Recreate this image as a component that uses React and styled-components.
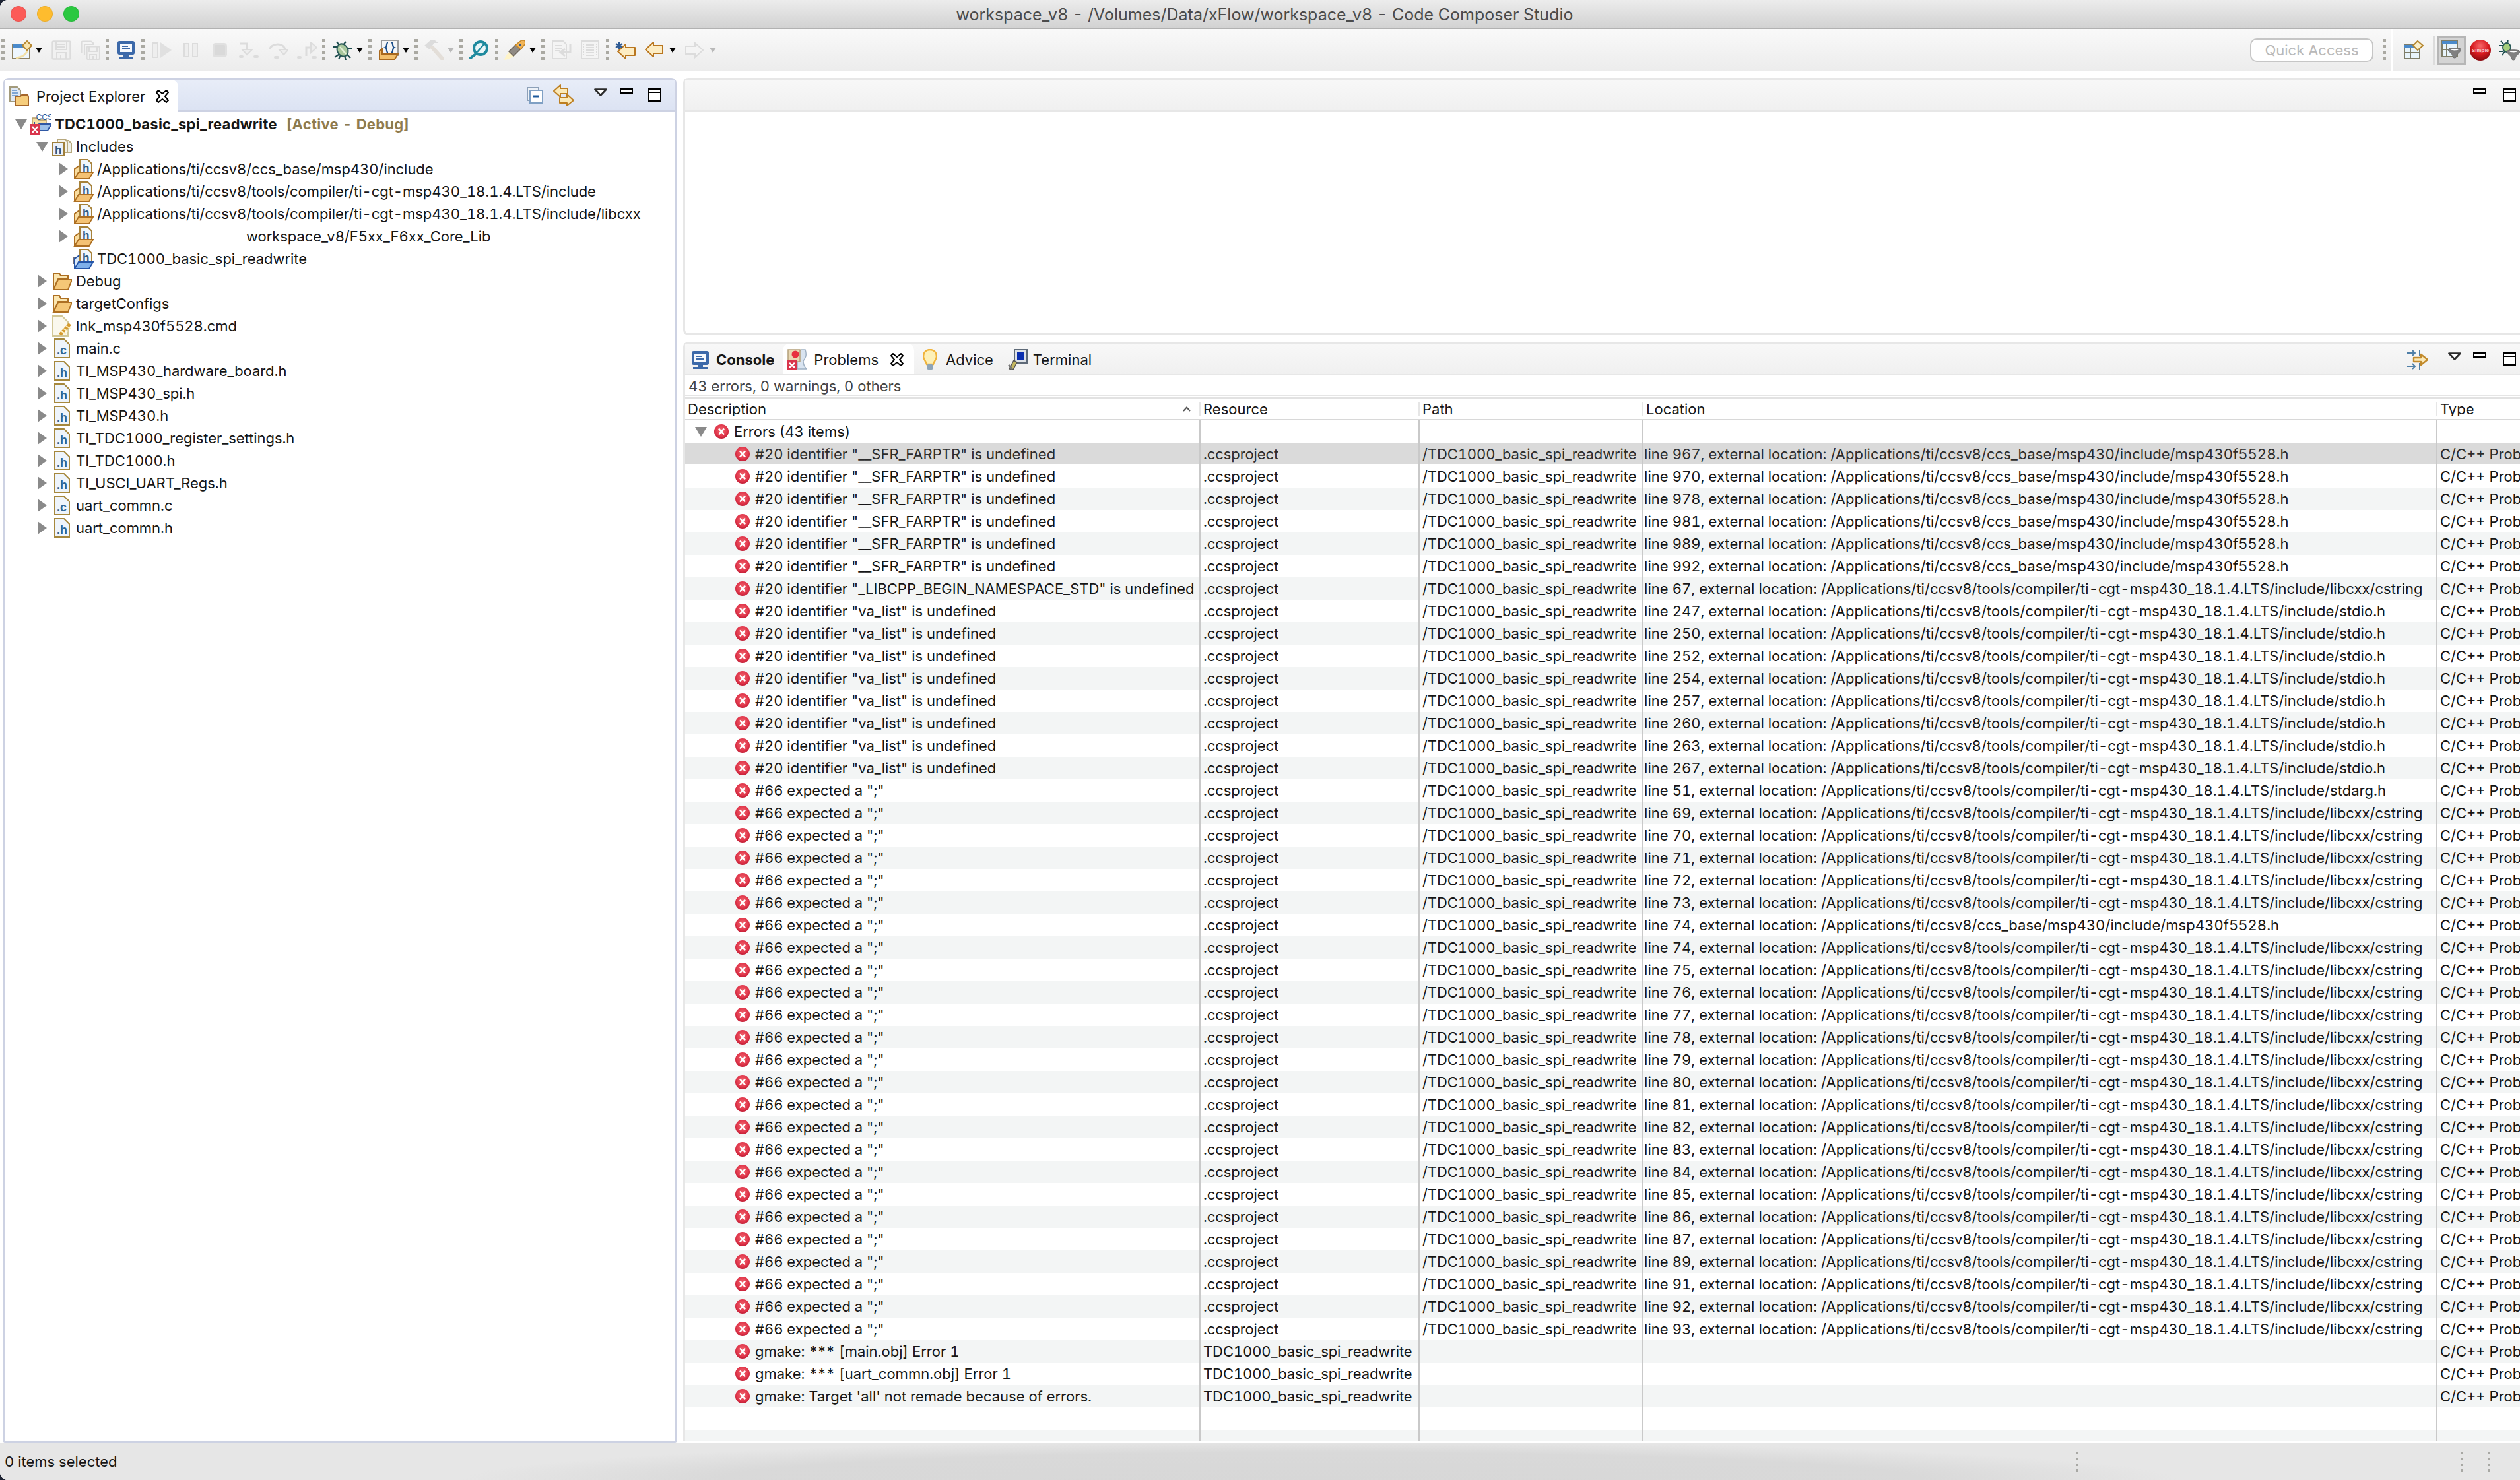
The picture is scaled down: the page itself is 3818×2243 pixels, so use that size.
import React from "react";
import styled, { createGlobalStyle } from "styled-components";

const Global = createGlobalStyle`
  html, body { margin: 0; padding: 0; background: #1d2333; }
  body { width: 3818px; height: 2243px; overflow: hidden; }
  * { box-sizing: border-box; }
`;

const Window = styled.div`
  width: 3818px; height: 2243px; display: flex; flex-direction: column; overflow: hidden;
  background: #fff; border-radius: 12px 0 0 12px;
  font-family: Inter, "Liberation Sans", sans-serif; font-size: 22px; color: #161616;
  font-variant-numeric: tabular-nums;
  -webkit-font-smoothing: antialiased;
`;
const TitleBar = styled.header`
  height: 44px; flex: none; display: flex; align-items: center; position: relative; padding-left: 16px; gap: 16px;
  background: linear-gradient(#ececec, #d2d2d2); border-bottom: 2px solid #b1b1b1;
`;
const Light = styled.span`
  width: 24px; height: 24px; border-radius: 50%; background: ${p => p.$c}; box-shadow: inset 0 0 0 1px rgba(0,0,0,.08);
`;
const WindowTitle = styled.div`
  position: absolute; left: 14px; right: 0; text-align: center; color: #4b4b4b; font-size: 25px; padding-top: 1px;
`;
const Toolbar = styled.div`
  height: 63px; flex: none; display: flex; align-items: center; padding-left: 2px;
  background: linear-gradient(#f9f9f9, #ececec);
`;
const Tool = styled.span`
  flex: none; display: flex; align-items: center; justify-content: center; width: ${p => p.$w}px; margin-left: ${p => p.$g || 0}px;
`;
const Grip = styled.span`
  flex: none; width: 5px; height: 33px; margin-left: ${p => p.$g || 0}px;
  background: repeating-linear-gradient(to bottom, #aaa9a2 0 5px, transparent 5px 9px);
`;
const ToolbarEnd = styled.div`
  margin-left: auto; display: flex; align-items: center; height: 100%;
`;
const QuickAccess = styled.div`
  width: 187px; height: 36px; border: 2px solid #c6c6c6; border-radius: 10px; background: #fff; color: #b9b9b9;
  display: flex; align-items: center; justify-content: center; font-size: 22px;
`;
const PerspectiveEdge = styled.span`
  width: 3px; height: 100%; background: #fff; margin-left: 8px;
`;
const PerspectiveRule = styled.span`
  width: 3px; height: 44px; background: #dcdcdc; margin-left: 14px;
`;
const PerspectiveActive = styled.span`
  width: 44px; height: 44px; margin-left: 3px; background: #d4d4d4; border: 3px solid #b6b6b6;
  display: flex; align-items: center; justify-content: center;
`;
const Main = styled.main`
  flex: 1; min-height: 0; display: flex; padding: 11px 0 0 5px; background: #fff;
`;
const LeftPanel = styled.section`
  width: 1020px; flex: none; display: flex; flex-direction: column; background: #fff;
  border: 3px solid #cdd2e3; border-radius: 8px 8px 2px 2px;
`;
const LeftHeader = styled.div`
  height: 48px; flex: none; display: flex; background: linear-gradient(#e8edf8, #dce3f3); border-bottom: 3px solid #cdd2e3;
`;
const ActiveTab = styled.div`
  height: 48px; display: flex; align-items: center; background: #fff; border-radius: 0 10px 0 0;
  padding: 2px ${p => p.$pr}px 0 ${p => p.$pl}px;
`;
const TabText = styled.span`
  margin-left: ${p => p.$g}px; font-weight: ${p => (p.$bold ? 700 : 400)}; white-space: nowrap;
`;
const CloseSlot = styled.span`
  display: flex; margin-left: ${p => p.$g}px;
`;
const Actions = styled.div`
  margin-left: auto; display: flex; align-items: flex-start; padding-right: ${p => p.$pr}px;
`;
const Action = styled.span`
  display: flex; margin-left: ${p => p.$g || 0}px; margin-top: ${p => p.$top}px;
`;
const Tree = styled.div`
  padding-top: 2px;
`;
const TreeRow = styled.div`
  height: 34px; display: flex; align-items: center; padding-left: ${p => 13 + p.$depth * 32}px; white-space: nowrap;
`;
const Twisty = styled.span`
  width: 22px; flex: none; display: flex; justify-content: center;
`;
const TreeIcon = styled.span`
  width: 32px; margin-left: 3px; flex: none; display: flex; justify-content: center;
`;
const TreeLabel = styled.span`
  margin-left: ${p => 5 + (p.$skip || 0)}px; font-weight: ${p => (p.$bold ? 700 : 400)};
  letter-spacing: ${p => (p.$bold ? "0.25px" : "-0.05px")};
`;
const Decoration = styled.span`
  margin-left: 14px; font-weight: 700; color: #8f7b4e; letter-spacing: 0.25px;
`;
const RightColumn = styled.div`
  flex: 1; min-width: 0; margin-left: 10px; display: flex; flex-direction: column; gap: 10px; padding-bottom: 3px;
`;
const EditorPanel = styled.section`
  height: 390px; flex: none; border: 3px solid #e7e7e7; border-right: 0; border-radius: 8px 0 0 8px; display: flex; flex-direction: column;
`;
const GreyHeader = styled.div`
  height: 48px; flex: none; display: flex; background: linear-gradient(#f8f8f8, #f0f0f0); border-bottom: 2px solid #e7e7e7;
`;
const ViewPanel = styled.section`
  flex: 1; min-height: 0; border-top: 3px solid #e7e7e7; border-left: 3px solid #e7e7e7; border-radius: 8px 0 0 0;
  display: flex; flex-direction: column;
`;
const ViewTab = styled.div`
  height: 46px; display: flex; align-items: center; padding: 2px ${p => p.$pr || 0}px 0 ${p => p.$pl || 0}px;
  margin-left: ${p => p.$ml || 0}px; border-radius: 10px 10px 0 0; background: ${p => (p.$active ? "#fff" : "transparent")};
`;
const SummaryLine = styled.div`
  height: 31px; flex: none; display: flex; align-items: center; padding: 3px 0 0 5px; color: #444; border-bottom: 2px solid #e5e5e5;
`;
const TableRule = styled.div`
  height: 4px; flex: none; border-bottom: 2px solid #e2e2e2;
`;
const columns = "779px 332px 339px 1203px 1fr";
const HeaderRow = styled.div`
  height: 33px; flex: none; display: grid; grid-template-columns: ${columns}; border-bottom: 2px solid #d8d8d8; overflow: hidden;
`;
const HeaderCell = styled.div`
  display: flex; align-items: center; padding-right: 13px; white-space: nowrap; overflow: hidden;
  justify-content: space-between; height: 22px; margin-top: 5px;
  border-left: ${p => (p.$first ? "0" : "2px solid #e6e6e6")}; padding-left: 4px;
`;
const TableBody = styled.div`
  flex: 1; min-height: 0; overflow: hidden;
`;
const Row = styled.div`
  height: 34px; display: grid; grid-template-columns: ${columns};
  background: ${p => (p.$selected ? "linear-gradient(#dadada 32px, #fff 32px)" : p.$shade ? "#f3f5f5" : "#fff")};
  color: ${p => (p.$selected ? "#2c2c2c" : "#161616")};
`;
const Cell = styled.div`
  height: 34px; display: flex; align-items: center; white-space: pre; overflow: hidden; color: inherit;
  padding-left: ${p => p.$pl ?? 4}px; border-left: ${p => (p.$first ? "0" : "2px solid #c9c9c9")};
  letter-spacing: ${p => p.$ls || 0}px;
`;
const Stars = styled.span`
  letter-spacing: -1.5px; margin-right: 1.5px;
`;
const CellIcon = styled.span`
  display: flex; flex: none; margin-right: 8px;
`;
const RowTwisty = styled.span`
  display: flex; flex: none; margin-right: 11px;
`;
const StatusBar = styled.footer`
  height: 56px; flex: none; position: relative; display: flex; align-items: center; padding-left: 7px; color: #161616;
  background: radial-gradient(ellipse 1300px 60px at 2000px 100%, #d7d7d7 0, #d9d9d9 70%, #e6e6e6 100%), #e6e6e6;
`;
const StatusGrips = styled.div`
  margin-left: auto; display: flex; padding-right: 45px;
`;
const StatusGrip = styled.span`
  width: 3px; height: 31px; margin-left: ${p => p.$g}px;
  background: repeating-linear-gradient(to bottom, #a8a8a4 0 4px, transparent 4px 9px);
`;

/* ---------- icons ---------- */
const Ico = ({ w, h, vb, children }) => (
  <svg width={w} height={h} viewBox={vb || `0 0 ${w} ${h}`} style={{ display: "block", flex: "none" }}>{children}</svg>
);
const DropArrow = ({ off }) => <Ico w={10} h={8}><path d="M0 0H10L5 8Z" fill={off ? "#b9b9b9" : "#000"} /></Ico>;
const NewIcon = () => (
  <Ico w={30} h={29}>
    <rect x="1" y="6" width="26" height="22" fill="#eef6fd" stroke="#8e8263" strokeWidth="2" />
    <rect x="1" y="6" width="20" height="5" fill="#4a8acb" />
    <path d="M24 14C22 22 15 26 6 27" fill="none" stroke="#f3e0a6" strokeWidth="3" />
    <path d="M23 1L30 8L23 15L16 8Z" fill="#f9e5ad" stroke="#b5862e" strokeWidth="2" />
  </Ico>
);
const off = "#dcdcdc";
const SaveIcon = () => (
  <Ico w={30} h={30}>
    <path d="M3 1.5H27A1.5 1.5 0 0 1 28.5 3V27A1.5 1.5 0 0 1 27 28.5H3A1.5 1.5 0 0 1 1.5 27V3A1.5 1.5 0 0 1 3 1.5Z" fill="#f1f1f1" stroke={off} strokeWidth="2.4" />
    <path d="M7 2V14H23V2M9 6H21M9 10H21M8 28V19H22V28M14 22V28" fill="none" stroke={off} strokeWidth="2" />
  </Ico>
);
const SaveAllIcon = () => (
  <Ico w={30} h={30}>
    <path d="M1.5 19V3A1.5 1.5 0 0 1 3 1.5H16L20 5" fill="none" stroke={off} strokeWidth="2.2" />
    <path d="M6 23V6H21" fill="none" stroke={off} strokeWidth="2.2" />
    <rect x="9.5" y="9.5" width="19.5" height="19.5" rx="2" fill="#f1f1f1" stroke={off} strokeWidth="2.2" />
    <path d="M13 10V17H25V10M14 29V22H24V29M19 24V29" fill="none" stroke={off} strokeWidth="2" />
  </Ico>
);
const ConsoleIcon = () => (
  <Ico w={26} h={27}>
    <rect x="0" y="0" width="26" height="21" rx="3" fill="#3c69a9" />
    <rect x="4" y="4" width="18" height="13" fill="#f6f9fd" />
    <path d="M7 8H16M7 12H19" stroke="#3c69a9" strokeWidth="2" />
    <rect x="9" y="21" width="8" height="3" fill="#3c69a9" /><rect x="2" y="24" width="22" height="3" fill="#3c69a9" />
  </Ico>
);
const ResumeIcon = () => (
  <Ico w={30} h={28}><rect x="1" y="3" width="8" height="22" fill="#eee" stroke={off} strokeWidth="2" /><path d="M13 2L30 14L13 26Z" fill="#e0e0e0" /></Ico>
);
const SuspendIcon = () => (
  <Ico w={22} h={22}><rect x="1" y="1" width="7" height="20" fill="#eee" stroke={off} strokeWidth="2" /><rect x="14" y="1" width="7" height="20" fill="#eee" stroke={off} strokeWidth="2" /></Ico>
);
const StopIcon = () => (
  <Ico w={22} h={22}><rect x="1.5" y="1.5" width="19" height="19" rx="3" fill="#d9d9d9" stroke="#e0e0e0" strokeWidth="3" /></Ico>
);
const StepInto = () => (
  <Ico w={30} h={24}><path d="M1 2H12V13" fill="none" stroke={off} strokeWidth="3" /><path d="M5 11H20L12 19Z" fill="#eee" stroke={off} strokeWidth="2" /><rect x="0" y="20" width="7" height="4" rx="2" fill={off} /><rect x="22" y="20" width="8" height="4" rx="2" fill={off} /></Ico>
);
const StepOver = () => (
  <Ico w={30} h={26}><path d="M2 12C2 3 22 0 25 12" fill="none" stroke={off} strokeWidth="3" /><path d="M16 12H30L23 20Z" fill="#eee" stroke={off} strokeWidth="2" /><rect x="8" y="22" width="8" height="4" rx="2" fill={off} /></Ico>
);
const StepReturn = () => (
  <Ico w={30} h={26}><path d="M14 22V9H24" fill="none" stroke={off} strokeWidth="3" /><path d="M21 1L30 9L21 17Z" fill="#eee" stroke={off} strokeWidth="2" /><rect x="0" y="22" width="7" height="4" rx="2" fill={off} /><rect x="22" y="22" width="8" height="4" rx="2" fill={off} /></Ico>
);
const BugIcon = () => (
  <Ico w={30} h={30}>
    <path d="M6 2L11 9M20 2L15 8M0 10H8L10 13M30 12H23L20 14M3 26L9 22L10 18M27 27L22 22L20 19M9 29L12 23M20 30L18 24" fill="none" stroke="#1c4c4e" strokeWidth="2.2" />
    <ellipse cx="15" cy="15" rx="8" ry="10" transform="rotate(-28 15 15)" fill="#a8c79d" stroke="#2a5a58" strokeWidth="2" />
    <path d="M11 10L20 21" stroke="#e4f0d8" strokeWidth="2.5" />
  </Ico>
);
const FolderBraces = () => (
  <Ico w={30} h={31}>
    <rect x="4" y="1" width="25" height="23" fill="#f6f6f6" stroke="#9b9b9b" strokeWidth="2" />
    <path d="M14 4C11 4 13 11 10 12C13 13 11 20 14 20M19 4C22 4 20 11 23 12C20 13 22 20 19 20" fill="none" stroke="#1b4e8a" strokeWidth="2.2" />
    <path d="M1 30V17L5 14V22H29L24 30Z" fill="#f2bf6b" stroke="#a9691e" strokeWidth="2" />
  </Ico>
);
const HammerIcon = () => (
  <Ico w={30} h={31}>
    <path d="M1 9L10 1H17L22 5L16 5L12 10L9 15Z" fill="#dcdcdc" />
    <path d="M13 12L28 29" stroke="#e3ded8" strokeWidth="6" strokeLinecap="round" />
  </Ico>
);
const SearchIcon = () => (
  <Ico w={30} h={29}>
    <circle cx="17" cy="12" r="10" fill="#eaf6f8" stroke="#1f8a9e" strokeWidth="4" />
    <path d="M11 20L2 27" stroke="#1f8a9e" strokeWidth="4" strokeLinecap="round" />
    <path d="M12 18L22 6" stroke="#1f8a9e" strokeWidth="2.5" />
  </Ico>
);
const PenIcon = () => (
  <Ico w={32} h={31}>
    <path d="M0 31C2 24 6 20 10 16L17 23C14 26 8 30 0 31Z" fill="#fff4c8" />
    <path d="M7 18L18 7L25 14L14 25Z" fill="#8f8a84" stroke="#6d655c" strokeWidth="1.5" />
    <path d="M17 8L26 1L31 1L32 6L25 15Z" fill="#f2b558" stroke="#c08325" strokeWidth="1.5" />
    <circle cx="24" cy="8" r="1.8" fill="#2f5a94" />
  </Ico>
);
const DocArrow = () => (
  <Ico w={30} h={29}>
    <path d="M1 1H17L22 6V28H1Z" fill="#f4f4f4" stroke={off} strokeWidth="2" />
    <path d="M5 8H15M5 12H15M5 16H12" stroke={off} strokeWidth="2" />
    <path d="M28 5V18H15M20 13L13 18L20 24" fill="none" stroke={off} strokeWidth="3" />
  </Ico>
);
const ListDoc = () => (
  <Ico w={28} h={29}>
    <rect x="1" y="1" width="26" height="27" fill="#f4f4f4" stroke={off} strokeWidth="2" />
    <path d="M8 7H20M8 11H20M8 15H20M8 19H20M8 23H20" stroke={off} strokeWidth="2" />
    <path d="M4 5V24M24 5V24" stroke={off} strokeWidth="2" strokeDasharray="2 2" />
  </Ico>
);
const BackArrowShape = () => (
  <path d="M1 12L13 1V6H27V18H13V23Z" fill="#fdedc4" stroke="#b9761f" strokeWidth="2" strokeLinejoin="round" />
);
const BackStar = () => (
  <Ico w={32} h={28}>
    <g transform="translate(3 4)"><BackArrowShape /></g>
    <path d="M6 1V13M1 4L11 10M11 4L1 10" stroke="#2e5a94" strokeWidth="2.4" />
  </Ico>
);
const BackIcon = () => <Ico w={29} h={25}><BackArrowShape /></Ico>;
const ForwardIcon = () => (
  <Ico w={28} h={26}><path d="M27 13L15 2V7H1V19H15V24Z" fill="#f4f4f4" stroke={off} strokeWidth="2" /></Ico>
);
const PerspectiveIcon = () => (
  <Ico w={30} h={29}>
    <rect x="1" y="7" width="23" height="21" fill="#e8f4fb" stroke="#7e7d68" strokeWidth="2" />
    <rect x="1" y="7" width="23" height="4" fill="#4a8acb" />
    <path d="M10 11V28M1 19H24" stroke="#7e7d68" strokeWidth="2" />
    <path d="M21 1L29 8L21 15L14 8Z" fill="#faf0cc" stroke="#b5862e" strokeWidth="2" />
  </Ico>
);
const Funnel = ({ x = 0, y = 0 }) => (
  <g transform={`translate(${x} ${y})`}>
    <path d="M0 4C0 1 20 1 20 4C20 7 13 11 13 14C13 18 7 18 7 14C7 11 0 7 0 4Z" fill="#808080" stroke="#6f6f6f" />
    <path d="M4 3.5H16C16 6 4 6 4 3.5Z" fill="#fff" />
  </g>
);
const PerspectiveFunnel = () => (
  <Ico w={30} h={30}>
    <rect x="1" y="1" width="23" height="24" fill="#e8f4fb" stroke="#7e7d68" strokeWidth="2" />
    <rect x="1" y="1" width="23" height="4" fill="#4a8acb" />
    <path d="M8 5V25M1 14H24" stroke="#7e7d68" strokeWidth="2" />
    <Funnel x={10} y={10} />
  </Ico>
);
const RedBall = () => (
  <Ico w={32} h={32}>
    <defs><radialGradient id="ball" cx=".5" cy=".3" r=".7"><stop offset="0" stopColor="#f7676a" /><stop offset=".55" stopColor="#d81b20" /><stop offset="1" stopColor="#8a0a10" /></radialGradient></defs>
    <circle cx="16" cy="16" r="16" fill="url(#ball)" />
    <text x="16" y="19" textAnchor="middle" fontSize="8" fontFamily="Liberation Sans, sans-serif" fontWeight="700" fill="#f6c8c8">Simple</text>
  </Ico>
);
const BugFunnel = () => (
  <Ico w={32} h={32}>
    <path d="M3 2L9 9M14 1L11 8M0 9H6M0 18H6L9 14M5 24L9 18" stroke="#1c4c4e" strokeWidth="2" fill="none" />
    <ellipse cx="12" cy="12" rx="6" ry="7" fill="#a5cf7c" stroke="#2a5a58" strokeWidth="2" />
    <Funnel x={12} y={14} />
  </Ico>
);
const ExplorerIcon = () => (
  <Ico w={30} h={30}>
    <path d="M1 1H12L17 6V23H1Z" fill="#dfe8f5" stroke="#a39b7c" strokeWidth="2" />
    <path d="M4 6H11M4 10H13M4 14H13" stroke="#5f8fc9" strokeWidth="1.6" />
    <path d="M9 29V15H17L19 13H28L29 16V29Z" fill="#f6cd7c" stroke="#a5652a" strokeWidth="2" />
  </Ico>
);
const CloseIcon = () => (
  <Ico w={20} h={20}>
    <path d="M4 1L10 6L16 1L19 4L14 10L19 16L16 19L10 14L4 19L1 16L6 10L1 4Z" fill="#fff" stroke="#000" strokeWidth="2" strokeLinejoin="round" />
  </Ico>
);
const CollapseIcon = () => (
  <Ico w={25} h={25}>
    <rect x="1" y="1" width="17" height="19" fill="#eef2f8" stroke="#8da0b8" strokeWidth="2" />
    <rect x="5" y="5" width="19" height="19" fill="#fff" stroke="#7fa0c4" strokeWidth="2" />
    <path d="M10 14H19" stroke="#1e5a9c" strokeWidth="3" />
  </Ico>
);
const LinkIcon = () => (
  <Ico w={32} h={33}>
    <path d="M1 10L11 1V6H22V14H11V19Z" fill="#fbe9b8" stroke="#bd7f22" strokeWidth="2" strokeLinejoin="round" />
    <path d="M31 24L21 15V20H10V28H21V32Z" fill="#fbe9b8" stroke="#bd7f22" strokeWidth="2" strokeLinejoin="round" />
  </Ico>
);
const MenuTri = () => <Ico w={20} h={12}><path d="M1.5 1.5H18.5L10 10.5Z" fill="#fff" stroke="#2b2b2b" strokeWidth="2.6" strokeLinejoin="round" /></Ico>;
const MinIcon = () => <Ico w={20} h={8}><rect x="1" y="1" width="18" height="6" fill="#fff" stroke="#000" strokeWidth="2" /></Ico>;
const MaxIcon = () => (
  <Ico w={20} h={20}><rect x="1" y="1" width="18" height="18" fill="#fff" stroke="#000" strokeWidth="2" /><path d="M1 6H19" stroke="#000" strokeWidth="2" /></Ico>
);
const PinIcon = () => (
  <Ico w={32} h={30}>
    <path d="M0 5H12M8 1L12 5L8 9M0 25H12M8 21L12 25L8 29" fill="none" stroke="#4f7fa8" strokeWidth="2" />
    <path d="M19 0V10M19 20V30" stroke="#4f7fa8" strokeWidth="2" />
    <path d="M10 12H21V7L31 15L21 23V18H10Z" fill="#fbe9b8" stroke="#c28a2c" strokeWidth="2.4" strokeLinejoin="round" />
  </Ico>
);
const TriDown = () => <Ico w={18} h={15}><path d="M0 0H18L9 15Z" fill="#8a8a8a" /></Ico>;
const TriRight = () => <Ico w={14} h={20}><path d="M0 0L14 10L0 20Z" fill="#8a8a8a" /></Ico>;
const ProjectIcon = () => (
  <Ico w={32} h={34}>
    <path d="M3 18V8H10L12 11H24V18Z" fill="#f7e0a4" stroke="#b59b63" strokeWidth="1.5" />
    <path d="M6 27L13 17H32L26 27Z" fill="#9cc1ea" stroke="#2f58a4" strokeWidth="2" />
    <path d="M6 14V27" stroke="#2f58a4" strokeWidth="2" />
    <rect x="0" y="17" width="14" height="17" fill="#d9354c" />
    <path d="M3 21L11 30M11 21L3 30" stroke="#fff" strokeWidth="2.4" />
    <text x="21" y="11" textAnchor="middle" fontSize="12" fontFamily="Inter, sans-serif" fill="#2a5a97">CCS</text>
  </Ico>
);
const HText = ({ x, y, s = 18 }) => (
  <text x={x} y={y} fontSize={s} fontWeight="700" fontFamily="Liberation Sans, sans-serif" fill="#2f5a84">h</text>
);
const IncludesIcon = () => (
  <Ico w={30} h={30}>
    <path d="M13 6H25L29 10V24H13Z" fill="#eef0ea" stroke="#b7a87e" strokeWidth="2" />
    <path d="M8 4H20L23 8V24H8Z" fill="#f4f3ea" stroke="#b7a87e" strokeWidth="2" />
    <rect x="1" y="9" width="17" height="20" fill="#eaf1fb" stroke="#a0803c" strokeWidth="2" />
    <HText x={4} y={26} s={17} />
  </Ico>
);
const IncFolderIcon = ({ blue }) => (
  <Ico w={32} h={31}>
    {blue && <path d="M2 23V13H7" fill="none" stroke="#6d6d7c" strokeWidth="2" />}
    <path d="M11 1H23L29 7V22H11Z" fill="#f1f6fc" stroke="#a7823a" strokeWidth="2" />
    <HText x={15} y={19} s={17} />
    <path d="M3 30V14L10 10V20H29L24 30Z" fill={blue ? "#dceafa" : "#f9dda0"} stroke="none" />
    <path d="M3 30L9 20H31L25 30Z" fill={blue ? "#7fb0ea" : "#f4c274"} stroke={blue ? "#2455a8" : "#ad6f22"} strokeWidth="2" />
    <path d="M3 30V15L10 10" fill="none" stroke={blue ? "#2455a8" : "#ad6f22"} strokeWidth="2" />
  </Ico>
);
const FolderIcon = () => (
  <Ico w={30} h={30}>
    <path d="M2 28V3H11L13 7H24V12H9Z" fill="#fbe6b0" stroke="#ad6f22" strokeWidth="2" />
    <path d="M2 28L9 13H30L24 28Z" fill="#f5c777" stroke="#ad6f22" strokeWidth="2" />
  </Ico>
);
const LinkerIcon = () => (
  <Ico w={30} h={32}>
    <path d="M1 1H15L24 10V31H1Z" fill="#faf8ed" stroke="#d2c796" strokeWidth="2" />
    <path d="M12 29L27 13" stroke="#d49a2f" strokeWidth="5" />
    <path d="M14 24L21 28M17 20L24 24M21 16L28 20" stroke="#fff0c0" strokeWidth="2" />
  </Ico>
);
const CodeFile = ({ glyph }) => (
  <Ico w={24} h={30}>
    <path d="M1 1H15L23 9V29H1Z" fill="#eef4fb" stroke="#a6883d" strokeWidth="2" />
    <text x="4" y="24" fontSize="18" fontWeight="700" fontFamily="Liberation Sans, sans-serif" fill="#2f6696">{glyph}</text>
  </Ico>
);
const ErrorIcon = () => (
  <Ico w={22} h={22}>
    <defs>
      <radialGradient id="err" cx=".5" cy=".42" r=".6"><stop offset="0" stopColor="#f26a72" /><stop offset=".7" stopColor="#e0354a" /><stop offset="1" stopColor="#bd1a32" /></radialGradient>
    </defs>
    <circle cx="11" cy="11" r="11" fill="url(#err)" />
    <path d="M7 6.5L15 15.5M15 6.5L7 15.5" stroke="#fff" strokeWidth="2.6" />
  </Ico>
);
const ProblemsIcon = () => (
  <Ico w={30} h={32}>
    <path d="M21 1H27C30 10 27 14 24 18C24 24 26 27 29 30H15V6L21 1Z" fill="#d9e4f0" stroke="#9fb1c4" strokeWidth="1.5" />
    <rect x="1" y="1" width="18" height="18" fill="#ead8b4" stroke="#b4a07a" strokeWidth="1.5" />
    <circle cx="12" cy="8" r="5.5" fill="#e8303f" />
    <rect x="0" y="16" width="14" height="16" fill="#d9354c" />
    <path d="M3 21L11 28M11 21L3 28" stroke="#fff" strokeWidth="2.6" />
  </Ico>
);
const BulbIcon = () => (
  <Ico w={22} h={32}>
    <path d="M11 1C5 1 1 5 1 11C1 16 5 18 6 23H16C17 18 21 16 21 11C21 5 17 1 11 1Z" fill="#fdf0b8" stroke="#f0b33a" strokeWidth="2.4" />
    <rect x="6.5" y="23" width="9" height="8" rx="2" fill="#8ea4b8" />
  </Ico>
);
const TerminalIcon = () => (
  <Ico w={31} h={32}>
    <rect x="11" y="1" width="19" height="20" fill="#dfe3e8" stroke="#5e6a78" strokeWidth="2" />
    <rect x="15" y="4" width="11" height="12" fill="#0b2fb0" />
    <path d="M3 30L10 17L15 20L9 31Z" fill="#c4b760" stroke="#555" strokeWidth="1.5" />
    <path d="M2 24L8 30" stroke="#777" strokeWidth="3" />
  </Ico>
);

/* ---------- data ---------- */
const T = "/Applications/ti/ccsv8/tools/compiler/ti-cgt-msp430_18.1.4.LTS/include";
const M = "/Applications/ti/ccsv8/ccs_base/msp430/include/msp430f5528.h";
const sfr = '#20 identifier "__SFR_FARPTR" is undefined';
const vaList = '#20 identifier "va_list" is undefined';
const exp = '#66 expected a ";"';
const cs = `${T}/libcxx/cstring`;
const raw = [
  ...[967, 970, 978, 981, 989, 992].map(n => [sfr, n, M]),
  ['#20 identifier "_LIBCPP_BEGIN_NAMESPACE_STD" is undefined', 67, cs],
  ...[247, 250, 252, 254, 257, 260, 263, 267].map(n => [vaList, n, `${T}/stdio.h`]),
  [exp, 51, `${T}/stdarg.h`],
  ...[69, 70, 71, 72, 73].map(n => [exp, n, cs]),
  [exp, 74, M],
  ...[74, 75, 76, 77, 78, 79, 80, 81, 82, 83, 84, 85, 86, 87, 89, 91, 92, 93].map(n => [exp, n, cs]),
];
const problems = [
  ...raw.map(([desc, line, path]) => ({
    desc, res: ".ccsproject", path: "/TDC1000_basic_spi_readwrite", loc: `line ${line}, external location: ${path}`,
  })),
  { desc: <>gmake: <Stars>***</Stars> [main.obj] Error 1</>, res: "TDC1000_basic_spi_readwrite", path: "", loc: "" },
  { desc: <>gmake: <Stars>***</Stars> [uart_commn.obj] Error 1</>, res: "TDC1000_basic_spi_readwrite", path: "", loc: "" },
  { desc: "gmake: Target 'all' not remade because of errors.", res: "TDC1000_basic_spi_readwrite", path: "", loc: "" },
].map(p => ({ ...p, type: "C/C++ Problem" }));

const tools = [
  [0, "g"], [11, 30, <NewIcon />], [6, 10, <DropArrow />], [14, 30, <SaveIcon />], [14, 30, <SaveAllIcon />],
  [8, "g"], [13, 26, <ConsoleIcon />], [10, "g"], [11, 30, <ResumeIcon />], [18, 22, <SuspendIcon />], [22, 22, <StopIcon />],
  [18, 30, <StepInto />], [15, 30, <StepOver />], [13, 30, <StepReturn />], [8, "g"], [11, 30, <BugIcon />], [6, 10, <DropArrow />],
  [8, "g"], [11, 30, <FolderBraces />], [6, 10, <DropArrow />], [8, "g"], [9, 30, <HammerIcon />], [6, 10, <DropArrow off />],
  [8, "g"], [10, 30, <SearchIcon />], [9, "g"], [9, 32, <PenIcon />], [6, 10, <DropArrow />], [8, "g"], [11, 30, <DocArrow />],
  [14, 28, <ListDoc />], [10, "g"], [9, 32, <BackStar />], [13, 29, <BackIcon />], [8, 10, <DropArrow />], [14, 28, <ForwardIcon />],
  [9, 10, <DropArrow off />],
];

const treeRows = [
  { d: 0, open: true, icon: <ProjectIcon />, label: "TDC1000_basic_spi_readwrite", bold: true, deco: "[Active - Debug]" },
  { d: 1, open: true, icon: <IncludesIcon />, label: "Includes" },
  { d: 2, arrow: true, icon: <IncFolderIcon />, label: "/Applications/ti/ccsv8/ccs_base/msp430/include" },
  { d: 2, arrow: true, icon: <IncFolderIcon />, label: `${T}` },
  { d: 2, arrow: true, icon: <IncFolderIcon />, label: `${T}/libcxx` },
  { d: 2, arrow: true, icon: <IncFolderIcon />, label: "workspace_v8/F5xx_F6xx_Core_Lib", skip: 226 },
  { d: 2, icon: <IncFolderIcon blue />, label: "TDC1000_basic_spi_readwrite" },
  { d: 1, arrow: true, icon: <FolderIcon />, label: "Debug" },
  { d: 1, arrow: true, icon: <FolderIcon />, label: "targetConfigs" },
  { d: 1, arrow: true, icon: <LinkerIcon />, label: "lnk_msp430f5528.cmd" },
  { d: 1, arrow: true, icon: <CodeFile glyph=".c" />, label: "main.c" },
  { d: 1, arrow: true, icon: <CodeFile glyph=".h" />, label: "TI_MSP430_hardware_board.h" },
  { d: 1, arrow: true, icon: <CodeFile glyph=".h" />, label: "TI_MSP430_spi.h" },
  { d: 1, arrow: true, icon: <CodeFile glyph=".h" />, label: "TI_MSP430.h" },
  { d: 1, arrow: true, icon: <CodeFile glyph=".h" />, label: "TI_TDC1000_register_settings.h" },
  { d: 1, arrow: true, icon: <CodeFile glyph=".h" />, label: "TI_TDC1000.h" },
  { d: 1, arrow: true, icon: <CodeFile glyph=".h" />, label: "TI_USCI_UART_Regs.h" },
  { d: 1, arrow: true, icon: <CodeFile glyph=".c" />, label: "uart_commn.c" },
  { d: 1, arrow: true, icon: <CodeFile glyph=".h" />, label: "uart_commn.h" },
];

export default function App() {
  return (
    <Window>
      <Global />
      <TitleBar>
        <Light $c="#fc5b57" /><Light $c="#febc2e" /><Light $c="#2bc840" />
        <WindowTitle>workspace_v8 - /Volumes/Data/xFlow/workspace_v8 - Code Composer Studio</WindowTitle>
      </TitleBar>
      <Toolbar>
        {tools.map(([g, w, icon], i) =>
          w === "g" ? <Grip key={i} $g={g} /> : <Tool key={i} $g={g} $w={w}>{icon}</Tool>
        )}
        <ToolbarEnd>
          <QuickAccess>Quick Access</QuickAccess>
          <Grip $g={14} />
          <PerspectiveEdge />
          <Tool $g={16} $w={30}><PerspectiveIcon /></Tool>
          <PerspectiveRule />
          <PerspectiveActive><PerspectiveFunnel /></PerspectiveActive>
          <Tool $g={6} $w={32}><RedBall /></Tool>
          <Tool $g={12} $w={32}><BugFunnel /></Tool>
        </ToolbarEnd>
      </Toolbar>
      <Main>
        <LeftPanel>
          <LeftHeader>
            <ActiveTab $pl={6} $pr={14}>
              <ExplorerIcon />
              <TabText $g={11}>Project Explorer</TabText>
              <CloseSlot $g={16}><CloseIcon /></CloseSlot>
            </ActiveTab>
            <Actions $pr={20}>
              <Action $top={11}><CollapseIcon /></Action>
              <Action $g={15} $top={7}><LinkIcon /></Action>
              <Action $g={30} $top={13}><MenuTri /></Action>
              <Action $g={19} $top={13}><MinIcon /></Action>
              <Action $g={23} $top={13}><MaxIcon /></Action>
            </Actions>
          </LeftHeader>
          <Tree>
            {treeRows.map((r, i) => (
              <TreeRow key={i} $depth={r.d}>
                <Twisty>{r.open ? <TriDown /> : r.arrow ? <TriRight /> : null}</Twisty>
                <TreeIcon>{r.icon}</TreeIcon>
                <TreeLabel $bold={r.bold} $skip={r.skip}>{r.label}</TreeLabel>
                {r.deco && <Decoration>{r.deco}</Decoration>}
              </TreeRow>
            ))}
          </Tree>
        </LeftPanel>
        <RightColumn>
          <EditorPanel>
            <GreyHeader>
              <Actions $pr={6}>
                <Action $top={13}><MinIcon /></Action>
                <Action $g={25} $top={13}><MaxIcon /></Action>
              </Actions>
            </GreyHeader>
          </EditorPanel>
          <ViewPanel>
            <GreyHeader>
              <ViewTab $pl={10} $pr={13}>
                <ConsoleIcon /><TabText $g={11} $bold>Console</TabText>
              </ViewTab>
              <ViewTab $active $pl={7} $pr={16}>
                <ProblemsIcon /><TabText $g={10}>Problems</TabText><CloseSlot $g={18}><CloseIcon /></CloseSlot>
              </ViewTab>
              <ViewTab $pl={13}>
                <BulbIcon /><TabText $g={13}>Advice</TabText>
              </ViewTab>
              <ViewTab $ml={21}>
                <TerminalIcon /><TabText $g={8}>Terminal</TabText>
              </ViewTab>
              <Actions $pr={6}>
                <Action $top={9}><PinIcon /></Action>
                <Action $g={30} $top={13}><MenuTri /></Action>
                <Action $g={18} $top={13}><MinIcon /></Action>
                <Action $g={25} $top={13}><MaxIcon /></Action>
              </Actions>
            </GreyHeader>
            <SummaryLine>43 errors, 0 warnings, 0 others</SummaryLine>
            <TableRule />
            <HeaderRow>
              <HeaderCell $first>
                Description
                <Ico w={12} h={8}><path d="M1 7L6 1.5L11 7" fill="none" stroke="#555" strokeWidth="2" /></Ico>
              </HeaderCell>
              <HeaderCell>Resource</HeaderCell>
              <HeaderCell>Path</HeaderCell>
              <HeaderCell>Location</HeaderCell>
              <HeaderCell>Type</HeaderCell>
            </HeaderRow>
            <TableBody>
              <Row>
                <Cell $first $pl={15}>
                  <RowTwisty><TriDown /></RowTwisty><CellIcon><ErrorIcon /></CellIcon>Errors (43 items)
                </Cell>
                <Cell /><Cell /><Cell /><Cell />
              </Row>
              {problems.map((p, i) => (
                <Row key={i} $selected={i === 0} $shade={i % 2 === 0}>
                  <Cell $first $pl={76}><CellIcon><ErrorIcon /></CellIcon>{p.desc}</Cell>
                  <Cell $ls={-0.1}>{p.res}</Cell>
                  <Cell $ls={-0.1}>{p.path}</Cell>
                  <Cell $pl={1} $ls={0.05}>{p.loc}</Cell>
                  <Cell>{p.type}</Cell>
                </Row>
              ))}
              <Row><Cell $first /><Cell /><Cell /><Cell /><Cell /></Row>
              <Row $shade><Cell $first /><Cell /><Cell /><Cell /><Cell /></Row>
            </TableBody>
          </ViewPanel>
        </RightColumn>
      </Main>
      <StatusBar>
        0 items selected
        <StatusGrips>
          <StatusGrip $g={0} />
          <StatusGrip $g={579} />
          <StatusGrip $g={39} />
        </StatusGrips>
      </StatusBar>
    </Window>
  );
}
